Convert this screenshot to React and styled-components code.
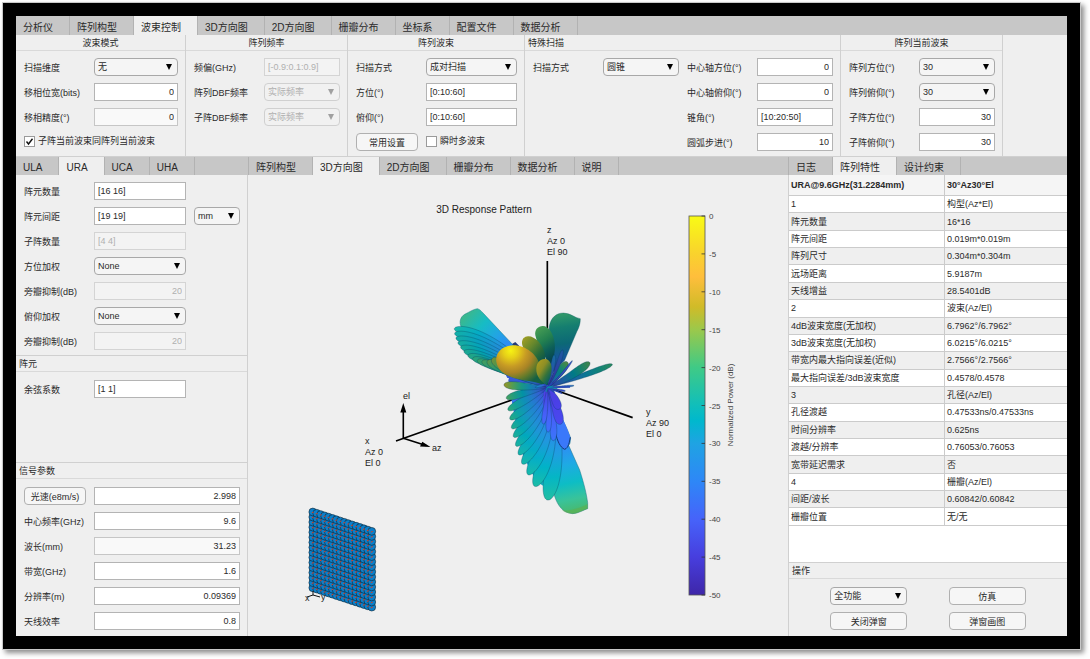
import React, { useId, useState } from 'react';
import styled, { createGlobalStyle, css } from 'styled-components';

const ink = '#2a2a2a';
const line = '#d0d0d0';
const panel = '#efefef';
const strip = '#c7c7c7';

const GlobalStyle = createGlobalStyle`
    * {
        box-sizing: border-box;
    }
    body {
        margin: 0;
        background: #fff;
    }
    body, button, input, select {
        font-family: "Liberation Sans", "Noto Sans CJK SC", sans-serif;
        font-size: 9px;
        color: ${ink};
    }
`;

/* ---------- layout ---------- */

const Page = styled.div`
    display: flex;
    min-height: 100vh;
    padding: 3px 10px 10px 3px;
`;

const Frame = styled.main`
    flex: 1;
    display: flex;
    flex-direction: column;
    min-width: 0;
    border: 13px solid #000;
    background: ${panel};
    box-shadow: 0 0 0 1px #c8c8c8, 3px 3px 5px 1px rgba(0, 0, 0, 0.45);
`;

const TabStrip = styled.div`
    display: flex;
    height: ${props => props.$tall ? 19 : 18}px;
    border-left: ${props => props.$divided ? '1px solid #b2b2b2' : 0};
    background: ${strip};
    flex-shrink: 0;
`;

const TabButton = styled.button`
    border: 0;
    border-right: 1px solid #b2b2b2;
    padding: 4px 16px 0 7px;
    background: ${props => props.$active ? panel : 'transparent'};
    font-size: 10px;
    line-height: 14px;
    white-space: nowrap;
`;

const Ribbon = styled.div`
    display: grid;
    grid-template-columns: 170fr 162fr 177fr 316fr 162fr 64fr;
    border-bottom: 1px solid ${line};
`;

const RibbonGroup = styled.section`
    border-right: 1px solid ${line};
    min-width: 0;
`;

const GroupTitle = styled.h2`
    margin: 0;
    padding: 0 3px;
    height: 16px;
    border-bottom: 1px solid #d9d9d9;
    font-size: 9px;
    font-weight: normal;
    line-height: 16px;
    text-align: ${props => props.$center ? 'center' : 'left'};
`;

const SectionTitle = styled(GroupTitle)`
    height: 17px;
    border-top: 1px solid ${line};
`;

const Fields = styled.div`
    display: grid;
    grid-template-columns: ${props => props.$columns || '62px minmax(0, 1fr)'};
    grid-auto-rows: 25px;
    column-gap: 8px;
    align-items: center;
    padding: 3px 7px 2px 8px;
`;

const Wide = styled.div`
    grid-column: 1 / -1;
    display: flex;
`;

const Workspace = styled.div`
    flex: 1;
    display: grid;
    grid-template-columns: 232px minmax(0, 1fr) 279px;
`;

const Column = styled.div`
    display: flex;
    flex-direction: column;
    min-width: 0;
`;

const SideBody = styled.div`
    flex: 1;
    display: flex;
    flex-direction: column;
    border-right: ${props => props.$left ? `1px solid ${line}` : 0};
    border-left: ${props => props.$left ? 0 : `1px solid ${line}`};
`;

const Grow = styled.div`
    flex: 1;
    padding-top: 1px;
`;

const Signal = styled.div`
    padding: 1px 0;
`;

/* ---------- controls ---------- */

const box = css`
    width: 100%;
    height: 18px;
    margin: 0;
    border: 1px solid #b4b4b4;
    background: #fff;
    line-height: 16px;
`;

const Label = styled.label`
    padding-top: 2px;
    line-height: 16px;
    white-space: nowrap;
`;

const TextInput = styled.input`
    ${box}
    padding: 0 3px;
    text-align: ${props => props.$right ? 'right' : 'left'};
    &:read-only {
        background: #f9f9f9;
        border-color: #c6c6c6;
    }
    &:disabled {
        background: #f3f3f3;
        border-color: #d4d4d4;
        color: #b0b0b0;
    }
`;

const SelectWrap = styled.span`
    display: grid;
    align-items: center;
    > * {
        grid-area: 1 / 1;
    }
    svg {
        justify-self: end;
        margin-right: 6px;
        pointer-events: none;
    }
`;

const StyledSelect = styled.select`
    ${box}
    appearance: none;
    padding: 0 14px 0 3px;
    border-color: #a8a8a8;
    border-radius: 4px;
    background: #f5f5f5;
    &:disabled {
        border-color: #d0d0d0;
        background: #f1f1f1;
        color: #b0b0b0;
        opacity: 1;
    }
`;

const Button = styled.button`
    ${box}
    padding: 1px 0 0;
    border-color: #b0b0b0;
    border-radius: 4px;
    background: #f6f6f6;
    white-space: nowrap;
`;

const CheckLabel = styled.label`
    display: flex;
    align-items: center;
    gap: 3px;
    line-height: 17px;
    white-space: nowrap;
`;

const CheckBox = styled.span`
    display: grid;
    > * {
        grid-area: 1 / 1;
    }
    input {
        appearance: none;
        width: 11px;
        height: 11px;
        margin: 0;
        border: 1px solid #9a9a9a;
        background: #fff;
    }
    svg {
        pointer-events: none;
        visibility: hidden;
    }
    input:checked + svg {
        visibility: visible;
    }
`;

const Actions = styled.div`
    display: grid;
    grid-template-columns: 77px 77px;
    grid-auto-rows: 25px;
    justify-content: space-evenly;
    align-items: center;
    padding: 4px 0 3px;
`;

/* ---------- result table ---------- */

const TableArea = styled.div`
    flex: 1;
    background: #fff;
`;

const ResultTable = styled.table`
    width: 100%;
    height: 351px;
    border-collapse: separate;
    border-spacing: 0;
    table-layout: fixed;
    th, td {
        padding: 0 0 0 2px;
        border-bottom: 1px solid #cbcbcb;
        text-align: left;
        line-height: 15px;
        white-space: nowrap;
    }
    td {
        padding-top: 1px;
    }
    th {
        height: 21px;
        background: #f5f5f5;
    }
    th:first-child, td:first-child {
        width: 156px;
        border-right: 1px solid #cbcbcb;
    }
    tbody tr:nth-child(even) {
        background: ${panel};
    }
`;

/* ---------- plot ---------- */

const Plot = styled.svg`
    flex: 1;
    display: block;
    width: 100%;
    min-height: 0;
    font-family: "Liberation Sans", sans-serif;
    font-size: 9px;
    fill: #222;
`;

const TickText = styled.text`
    font-size: 8px;
    fill: #444;
`;

const TitleText = styled.text`
    font-size: 10px;
    text-anchor: middle;
`;

const ribbonTabs = ['分析仪', '阵列构型', '波束控制', '3D方向图', '2D方向图', '栅瓣分布', '坐标系', '配置文件', '数据分析'];
const arrayTabs = ['ULA', 'URA', 'UCA', 'UHA'];
const plotTabs = ['阵列构型', '3D方向图', '2D方向图', '栅瓣分布', '数据分析', '说明'];
const infoTabs = ['日志', '阵列特性', '设计约束'];

const results = [
    ['1', '构型(Az*El)'],
    ['阵元数量', '16*16'],
    ['阵元间距', '0.019m*0.019m'],
    ['阵列尺寸', '0.304m*0.304m'],
    ['远场距离', '5.9187m'],
    ['天线增益', '28.5401dB'],
    ['2', '波束(Az/El)'],
    ['4dB波束宽度(无加权)', '6.7962°/6.7962°'],
    ['3dB波束宽度(无加权)', '6.0215°/6.0215°'],
    ['带宽内最大指向误差(近似)', '2.7566°/2.7566°'],
    ['最大指向误差/3dB波束宽度', '0.4578/0.4578'],
    ['3', '孔径(Az/El)'],
    ['孔径渡越', '0.47533ns/0.47533ns'],
    ['时间分辨率', '0.625ns'],
    ['渡越/分辨率', '0.76053/0.76053'],
    ['宽带延迟需求', '否'],
    ['4', '栅瓣(Az/El)'],
    ['间距/波长', '0.60842/0.60842'],
    ['栅瓣位置', '无/无'],
];

const parula = [
    [0, [62, 38, 168]],
    [0.1, [71, 62, 222]],
    [0.2, [70, 99, 250]],
    [0.3, [46, 135, 247]],
    [0.4, [31, 163, 227]],
    [0.46, [0, 184, 205]],
    [0.5, [16, 190, 187]],
    [0.6, [63, 202, 134]],
    [0.7, [155, 200, 75]],
    [0.76, [208, 187, 40]],
    [0.84, [255, 190, 60]],
    [0.9, [249, 210, 45]],
    [1, [249, 251, 21]],
];

function colorAt(value, shade = 1) {
    const i = Math.max(1, parula.findIndex(([stop]) => stop >= value));
    const [a, from] = parula[i - 1];
    const [b, to] = parula[i];
    const t = (value - a) / (b - a);
    return `rgb(${from.map((c, n) => Math.round((c + (to[n] - c) * t) * shade)).join(',')})`;
}

// Outline of a lobe: a curved spine from base to tip, rounded at the tip.
function lobePath([bx, by], [cx, cy], [tx, ty], width) {
    const left = [];
    const right = [];
    for (let i = 0; i <= 30; i++) {
        const s = 1 - Math.pow(1 - i / 30, 2);
        const q = 1 - s;
        const x = q * q * bx + 2 * q * s * cx + s * s * tx;
        const y = q * q * by + 2 * q * s * cy + s * s * ty;
        const dx = 2 * q * (cx - bx) + 2 * s * (tx - cx);
        const dy = 2 * q * (cy - by) + 2 * s * (ty - cy);
        const len = Math.hypot(dx, dy) || 1;
        const w = (width / 2) * Math.pow(s, 0.65) * Math.sqrt(1 - Math.pow(s, 6)) * 1.22;
        left.push(`${(x - dy / len * w).toFixed(1)} ${(y + dx / len * w).toFixed(1)}`);
        right.unshift(`${(x + dy / len * w).toFixed(1)} ${(y - dx / len * w).toFixed(1)}`);
    }
    return `M${left.join('L')}L${right.join('L')}Z`;
}

const origin = [322, 292];

// [spine control, tip, width, level at tip, shade]
const backLobes = [
    [[180, 140], [43, 116], 32, 0.52, 0.95],
    [[180, 155], [44, 130], 31, 0.51, 0.92],
    [[178, 170], [48, 144], 30, 0.51, 0.9],
    [[176, 182], [54, 158], 29, 0.52, 0.9],
    [[175, 195], [62, 171], 28, 0.53, 0.88],
    [[175, 206], [72, 184], 27, 0.54, 0.86],
    [[176, 216], [84, 196], 26, 0.56, 0.84],
    [[180, 226], [98, 205], 25, 0.58, 0.82],
    [[190, 236], [112, 211], 25, 0.61, 0.8],
    [[200, 242], [126, 214], 26, 0.63, 0.78],
    [[205, 246], [142, 213], 30, 0.66, 0.76],
    [[215, 248], [156, 206], 34, 0.7, 0.74],
];

const fanLobes = [
    [[366, 450], [322, 630], 54, 0.54, 0.98],
    [[356, 440], [284, 589], 46, 0.53, 0.97],
    [[348, 415], [264, 554], 41, 0.52, 0.96],
    [[340, 395], [247, 522], 37, 0.52, 0.95],
    [[332, 378], [236, 494], 34, 0.52, 0.94],
    [[324, 362], [228, 468], 32, 0.53, 0.92],
    [[316, 348], [221, 441], 31, 0.54, 0.9],
    [[308, 336], [215, 415], 29, 0.55, 0.88],
    [[300, 322], [210, 388], 28, 0.57, 0.86],
    [[290, 310], [204, 360], 26, 0.59, 0.84],
    [[278, 300], [199, 325], 25, 0.63, 0.8],
    [[265, 292], [192, 284], 26, 0.75, 0.78],
];

const innerLobes = [
    [[344, 390], [340, 452], 22, 0.25, 1],
    [[330, 370], [324, 426], 18, 0.24, 1],
    [[318, 350], [310, 402], 16, 0.22, 1],
    [[350, 345], [361, 403], 30, 0.12, 1.05],
    [[345, 320], [357, 358], 26, 0.1, 1.05],
];

const rightLobes = [
    [[420, 262], [517, 223], 18, 0.6, 0.68],
    [[385, 268], [449, 217], 26, 0.64, 0.66],
    [[348, 262], [382, 216], 27, 0.67, 0.68],
    [[352, 240], [368, 180], 13, 0.3, 0.65],
    [[338, 245], [343, 195], 13, 0.38, 0.68],
    [[350, 292], [402, 287], 6, 0.3, 0.8],
    [[350, 300], [376, 303], 6, 0.2, 0.8],
    [[355, 270], [397, 212], 6, 0.22, 0.8],
    [[330, 278], [286, 292], 8, 0.42, 0.85],
];

function Lobes({ items, name }) {
    return items.map(([via, tip, width, level, shade], i) => {
        const id = `${name}${i}`;
        const reach = Math.hypot(tip[0] - origin[0], tip[1] - origin[1]);
        return (
            <g key={id}>
                <radialGradient id={id} gradientUnits="userSpaceOnUse" cx={origin[0]} cy={origin[1]} r={reach}>
                    {[0, 0.2, 0.4, 0.6, 0.8, 1].map(s => (
                        <stop key={s} offset={s} stopColor={colorAt(0.08 + (level - 0.08) * Math.pow(s, 0.75), shade)} />
                    ))}
                </radialGradient>
                <path d={lobePath(origin, via, tip, width)} fill={`url(#${id})`} stroke="#06405c" strokeOpacity="0.6" strokeWidth="1.6" />
            </g>
        );
    });
}

function LinearStops({ id, x1, y1, x2, y2, stops }) {
    return (
        <linearGradient id={id} gradientUnits="userSpaceOnUse" x1={x1} y1={y1} x2={x2} y2={y2}>
            {stops.map(([offset, color]) => <stop key={offset} offset={offset} stopColor={color} />)}
        </linearGradient>
    );
}

function Pattern() {
    return (
        <g transform="translate(440 290) scale(0.3333)">
            <defs>
                <LinearStops id="wing" x1="72" y1="66" x2="235" y2="215" stops={[[0, '#40b785'], [0.3, '#16bcc4'], [0.55, '#22a4e4'], [0.8, '#3184fa'], [1, '#3b55d8']]} />
                <LinearStops id="tail" x1="340" y1="300" x2="415" y2="670" stops={[[0, '#4c3ae0'], [0.25, '#4463fa'], [0.45, '#2e8df4'], [0.6, '#1eaae4'], [0.75, '#0dbdc5'], [0.88, '#39c39a'], [1, '#4bb765']]} />
                <LinearStops id="fin" x1="360" y1="70" x2="385" y2="235" stops={[[0, '#329a68'], [0.25, '#157e70'], [0.55, '#0c6876'], [0.78, '#155798'], [1, '#223d9c']]} />
                <LinearStops id="leaf" x1="290" y1="120" x2="345" y2="200" stops={[[0, '#459b54'], [0.4, '#23804f'], [0.7, '#0d6058'], [1, '#074650']]} />
                <LinearStops id="olive" x1="248" y1="150" x2="318" y2="210" stops={[[0, '#9b9c25'], [0.35, '#66872c'], [0.7, '#256a3b'], [1, '#07514e']]} />
                <LinearStops id="nub" x1="290" y1="225" x2="338" y2="255" stops={[[0, '#a79a21'], [0.35, '#8d8e25'], [0.7, '#35733b'], [1, '#095e61']]} />
                <radialGradient id="fan" gradientUnits="userSpaceOnUse" cx="322" cy="292" r="330">
                    <stop offset="0" stopColor="#4f3be2" />
                    <stop offset="0.2" stopColor="#4660f6" />
                    <stop offset="0.45" stopColor="#2b93ee" />
                    <stop offset="0.7" stopColor="#17acd8" />
                    <stop offset="1" stopColor="#12b5b5" />
                </radialGradient>
                <radialGradient id="main" gradientUnits="userSpaceOnUse" cx="212" cy="182" r="112">
                    <stop offset="0" stopColor="#f7f313" />
                    <stop offset="0.2" stopColor="#e6cf18" />
                    <stop offset="0.42" stopColor="#c79b24" />
                    <stop offset="0.6" stopColor="#a98426" />
                    <stop offset="0.78" stopColor="#647b2a" />
                    <stop offset="1" stopColor="#146043" />
                </radialGradient>
            </defs>
            <path d="M322 -87V292" stroke="#000" strokeWidth="5" />
            <path d="M322 292L578 383M322 292L-132 453" stroke="#000" strokeWidth="5" />
            <path d="M216 162L226 156L238 168L262 215L215 190Z" fill="#253a78" />
            <path d="M190 240C230 240 300 270 322 292C280 280 230 276 207 276C200 268 214 265 202 264Z" fill="#3559d8" />
            <path d="M64 112C56 95 62 80 74 73C90 65 100 58 112 56C120 58 124 64 130 70L238 185L240 240L150 170Z" fill="url(#wing)" stroke="#137d86" strokeWidth="1.5" />
            <path d="M60 112C100 120 170 150 215 190V250C170 246 110 214 66 172Z" fill="#1b9fcf" />
            <Lobes items={backLobes} name="back" />
            <path d="M330 230C340 180 324 130 328 108C333 82 350 69 370 69C392 69 404 84 421 86C421 104 416 114 411 124L374 211L340 245Z" fill="url(#fin)" stroke="#0a565d" strokeWidth="1" />
            <path d="M308 108C324 107 338 127 343 152C348 180 342 207 330 225C318 205 292 165 286 136C283 118 295 109 308 108Z" fill="url(#leaf)" />
            <path d="M264 139C285 138 307 163 314 188C319 204 316 217 312 228C280 217 248 184 246 160C246 146 253 140 264 139Z" fill="url(#olive)" />
            <path d="M322 292C342 306 352 340 357 366C368 390 384 420 392 444C390 456 392 460 386 466L419 540C434 588 439 610 443 638V656C430 660 416 670 398 671C370 669 354 650 343 616C347 540 350 470 322 292Z" fill="url(#tail)" stroke="#1b7684" strokeWidth="1.5" />
            <path d="M366 660C388 665 418 654 443 642V656C430 660 416 670 398 671C384 671 374 668 366 660Z" fill="#63ae48" opacity="0.5" />
            <path d="M322 292L214 326L228 400L250 500L290 575L330 600L350 580C356 500 360 440 345 360Z" fill="url(#fan)" />
            <Lobes items={fanLobes} name="fan" />
            <path d="M330 300C348 310 357 345 356 366C372 390 384 420 391 442C388 456 386 474 374 478C352 470 344 430 340 380C336 350 330 320 330 300Z" fill="#3a78fa" />
            <path d="M391 442C388 456 386 474 374 478C360 472 352 452 347 430" fill="none" stroke="#123a78" strokeWidth="3" />
            <path d="M312 300C330 296 345 310 352 336C358 360 362 384 361 403C340 392 322 350 310 345Z" fill="#4e3fe6" />
            <Lobes items={innerLobes} name="inner" />
            <path d="M169 215C165 187 190 166 220 166C259 166 292 196 299 224C304 243 306 263 322 292C294 270 242 276 208 259C184 248 172 235 169 215Z" fill="url(#main)" />
            <Lobes items={rightLobes} name="right" />
            <path d="M315 207C329 208 336 222 335 241C334 260 326 274 321 287C306 276 287 260 289 235C290 218 301 206 315 207Z" fill="url(#nub)" />
            <path d="M322 292L312 282M322 292L336 280M322 292L366 310M322 292L344 308M322 292L390 291M322 292L308 308M322 292L330 314" stroke="#2647b5" strokeWidth="4" />
            <path d="M322 292L352 296M322 292L340 288M322 292L318 306" stroke="#0a8fa8" strokeWidth="3" />
        </g>
    );
}

function ElementGrid() {
    const cells = [];
    for (let col = 0; col < 16; col++) {
        for (let row = 15; row >= 0; row--) {
            cells.push([312.8 + col * 3.93, 512 + col * 1.29 + row * 5.05]);
        }
    }
    return (
        <g>
            {cells.map(([x, y]) => (
                <circle key={`${x}-${y}`} cx={x} cy={y} r="3.9" fill="#0c7fc9" stroke="#10242f" strokeWidth="0.6" />
            ))}
            {cells.map(([x, y]) => (
                <path key={`${x}-${y}`} d={`M${x - 1} ${y + 0.8}L${x + 1} ${y}`} stroke="#d0432a" strokeWidth="1" />
            ))}
            <path d="M313 591V595L307 597M313 595L320 597" fill="none" stroke="#111" strokeWidth="1" />
            <text x="305" y="601">x</text>
            <text x="321" y="600">y</text>
        </g>
    );
}

function ResponsePlot() {
    return (
        <Plot viewBox="248 175 540 461" role="img" aria-label="3D Response Pattern">
            <defs>
                <linearGradient id="scale" x1="0" y1="1" x2="0" y2="0">
                    {parula.map(([stop]) => <stop key={stop} offset={stop} stopColor={colorAt(stop)} />)}
                </linearGradient>
            </defs>
            <TitleText x="484" y="213">3D Response Pattern</TitleText>
            <text x="547" y="233">z</text>
            <text x="547" y="244">Az 0</text>
            <text x="547" y="255">El 90</text>
            <text x="646" y="415">y</text>
            <text x="646" y="426">Az 90</text>
            <text x="646" y="437">El 0</text>
            <text x="365" y="444">x</text>
            <text x="365" y="455">Az 0</text>
            <text x="365" y="466">El 0</text>
            <Pattern />
            <path d="M403.3 438.3V408M403.3 438.3L426 445.5" stroke="#000" strokeWidth="1.6" />
            <path d="M403.3 403L406.3 412.5H400.3ZM430.5 447L420 446.6L422.3 441.8Z" fill="#000" />
            <text x="403" y="399">el</text>
            <text x="432" y="451">az</text>
            <ElementGrid />
            <rect x="689" y="216" width="16" height="379" fill="url(#scale)" stroke="#555" strokeWidth="0.8" />
            {[0, 5, 10, 15, 20, 25, 30, 35, 40, 45, 50].map(db => (
                <g key={db}>
                    <path d={`M701.5 ${216 + db * 7.58}H705`} stroke="#333" strokeWidth="0.8" />
                    <TickText x="709" y={219 + db * 7.58}>{db ? `-${db}` : '0'}</TickText>
                </g>
            ))}
            <TickText textAnchor="middle" transform="translate(733 405) rotate(-90)">Normalized Power (dB)</TickText>
        </Plot>
    );
}

function Tabs({ items, initial, tall, divided }) {
    const [active, setActive] = useState(initial);
    return (
        <TabStrip role="tablist" $tall={tall} $divided={divided}>
            {items.map((item, i) => (
                <TabButton key={item} role="tab" aria-selected={i === active} $active={i === active} onClick={() => setActive(i)}>
                    {item}
                </TabButton>
            ))}
        </TabStrip>
    );
}

function Select({ value, disabled, ...rest }) {
    return (
        <SelectWrap>
            <StyledSelect disabled={disabled} defaultValue={value} {...rest}>
                <option>{value}</option>
            </StyledSelect>
            <svg width="6" height="6" viewBox="0 0 6 6">
                <path d="M0 0H6L3 6Z" fill={disabled ? '#a0a0a0' : '#000'} />
            </svg>
        </SelectWrap>
    );
}

function SelectField({ label, ...rest }) {
    const id = useId();
    return (
        <>
            <Label htmlFor={id}>{label}</Label>
            <Select id={id} {...rest} />
        </>
    );
}

function TextField({ label, value, right, ...rest }) {
    const id = useId();
    return (
        <>
            <Label htmlFor={id}>{label}</Label>
            <TextInput id={id} defaultValue={value} $right={right} {...rest} />
        </>
    );
}

function Check({ label, checked }) {
    return (
        <CheckLabel>
            <CheckBox>
                <input type="checkbox" defaultChecked={checked} />
                <svg width="11" height="11" viewBox="0 0 11 11">
                    <path d="M2.5 5.5L4.5 8L8.5 2.8" fill="none" stroke="#111" strokeWidth="1.4" />
                </svg>
            </CheckBox>
            {label}
        </CheckLabel>
    );
}

function BeamRibbon() {
    return (
        <Ribbon>
            <RibbonGroup>
                <GroupTitle $center>波束模式</GroupTitle>
                <Fields>
                    <SelectField label="扫描维度" value="无" />
                    <TextField label="移相位宽(bits)" value="0" right />
                    <TextField label="移相精度(°)" value="0" right readOnly />
                    <Wide><Check label="子阵当前波束同阵列当前波束" checked /></Wide>
                </Fields>
            </RibbonGroup>
            <RibbonGroup>
                <GroupTitle $center>阵列频率</GroupTitle>
                <Fields>
                    <TextField label="频偏(GHz)" value="[-0.9:0.1:0.9]" disabled />
                    <SelectField label="阵列DBF频率" value="实际频率" disabled />
                    <SelectField label="子阵DBF频率" value="实际频率" disabled />
                </Fields>
            </RibbonGroup>
            <RibbonGroup>
                <GroupTitle $center>阵列波束</GroupTitle>
                <Fields>
                    <SelectField label="扫描方式" value="成对扫描" />
                    <TextField label="方位(°)" value="[0:10:60]" />
                    <TextField label="俯仰(°)" value="[0:10:60]" />
                    <Button>常用设置</Button>
                    <Check label="瞬时多波束" />
                </Fields>
            </RibbonGroup>
            <RibbonGroup>
                <GroupTitle>特殊扫描</GroupTitle>
                <Fields $columns="repeat(2, 62px minmax(0, 1fr))">
                    <SelectField label="扫描方式" value="圆锥" />
                    <TextField label="中心轴方位(°)" value="0" right />
                    <span /><span />
                    <TextField label="中心轴俯仰(°)" value="0" right />
                    <span /><span />
                    <TextField label="锥角(°)" value="[10:20:50]" />
                    <span /><span />
                    <TextField label="圆弧步进(°)" value="10" right />
                </Fields>
            </RibbonGroup>
            <RibbonGroup>
                <GroupTitle $center>阵列当前波束</GroupTitle>
                <Fields>
                    <SelectField label="阵列方位(°)" value="30" />
                    <SelectField label="阵列俯仰(°)" value="30" />
                    <TextField label="子阵方位(°)" value="30" right />
                    <TextField label="子阵俯仰(°)" value="30" right />
                </Fields>
            </RibbonGroup>
        </Ribbon>
    );
}

function ArrayPanel() {
    const columns = '62px minmax(0, 1fr) 46px';
    return (
        <Column>
            <Tabs items={arrayTabs} initial={1} />
            <SideBody $left>
                <Fields $columns={columns}>
                    <TextField label="阵元数量" value="[16 16]" />
                    <span />
                    <TextField label="阵元间距" value="[19 19]" />
                    <Select value="mm" aria-label="阵元间距单位" />
                    <TextField label="子阵数量" value="[4 4]" disabled />
                    <span />
                    <SelectField label="方位加权" value="None" />
                    <span />
                    <TextField label="旁瓣抑制(dB)" value="20" right disabled />
                    <span />
                    <SelectField label="俯仰加权" value="None" />
                    <span />
                    <TextField label="旁瓣抑制(dB)" value="20" right disabled />
                </Fields>
                <SectionTitle>阵元</SectionTitle>
                <Grow>
                    <Fields $columns={columns}>
                        <TextField label="余弦系数" value="[1 1]" />
                    </Fields>
                </Grow>
                <SectionTitle>信号参数</SectionTitle>
                <Signal>
                    <Fields>
                        <Button>光速(e8m/s)</Button>
                        <TextInput defaultValue="2.998" aria-label="光速(e8m/s)" $right />
                        <TextField label="中心频率(GHz)" value="9.6" right />
                        <TextField label="波长(mm)" value="31.23" right readOnly />
                        <TextField label="带宽(GHz)" value="1.6" right />
                        <TextField label="分辨率(m)" value="0.09369" right />
                        <TextField label="天线效率" value="0.8" right />
                    </Fields>
                </Signal>
            </SideBody>
        </Column>
    );
}

function InfoPanel() {
    return (
        <Column>
            <Tabs items={infoTabs} initial={1} divided />
            <SideBody>
                <TableArea>
                    <ResultTable>
                        <thead>
                            <tr>
                                <th>URA@9.6GHz(31.2284mm)</th>
                                <th>30°Az30°El</th>
                            </tr>
                        </thead>
                        <tbody>
                            {results.map(([name, value]) => (
                                <tr key={name}>
                                    <td>{name}</td>
                                    <td>{value}</td>
                                </tr>
                            ))}
                        </tbody>
                    </ResultTable>
                </TableArea>
                <SectionTitle>操作</SectionTitle>
                <Actions>
                    <Select value="全功能" aria-label="功能" />
                    <Button>仿真</Button>
                    <Button>关闭弹窗</Button>
                    <Button>弹窗画图</Button>
                </Actions>
            </SideBody>
        </Column>
    );
}

export default function App() {
    return (
        <Page>
            <GlobalStyle />
            <Frame>
                <Tabs items={ribbonTabs} initial={2} tall />
                <BeamRibbon />
                <Workspace>
                    <ArrayPanel />
                    <Column>
                        <Tabs items={plotTabs} initial={1} divided />
                        <ResponsePlot />
                    </Column>
                    <InfoPanel />
                </Workspace>
            </Frame>
        </Page>
    );
}
